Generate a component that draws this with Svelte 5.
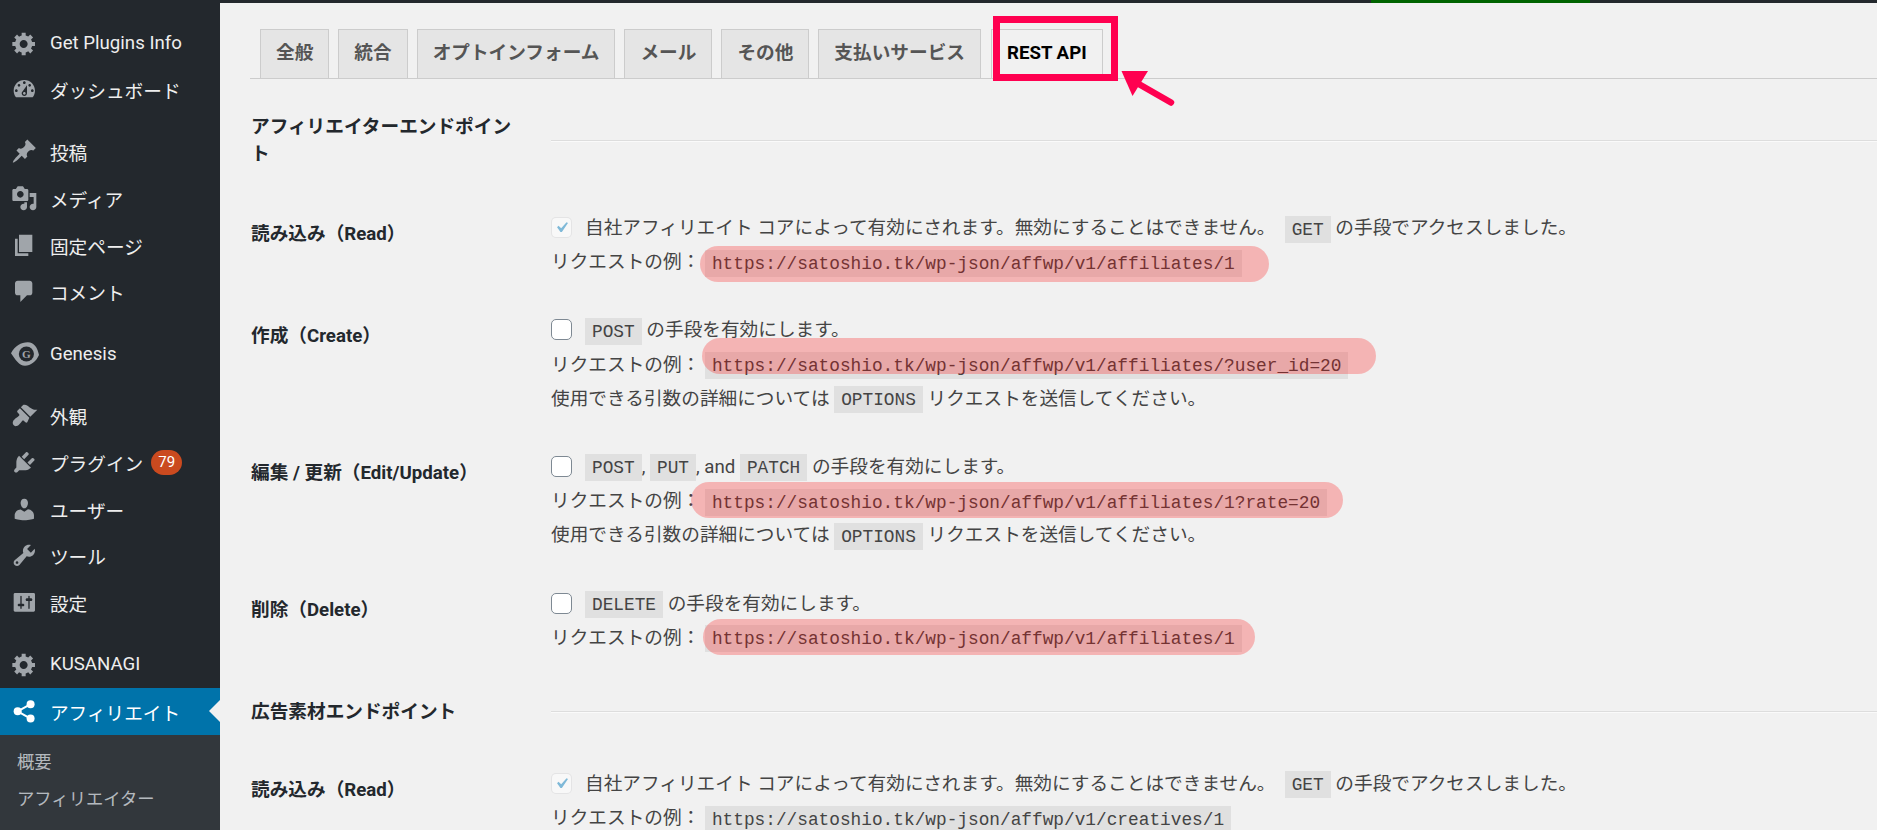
<script>
  const menu = [
    { label: "Get Plugins Info", icon: "gear" },
    { label: "ダッシュボード", icon: "dashboard" },
    { sep: true },
    { label: "投稿", icon: "pin" },
    { label: "メディア", icon: "media" },
    { label: "固定ページ", icon: "page" },
    { label: "コメント", icon: "comment" },
    { sep: true },
    { label: "Genesis", icon: "genesis" },
    { sep: true },
    { label: "外観", icon: "brush" },
    { label: "プラグイン", icon: "plugin", badge: 79 },
    { label: "ユーザー", icon: "user" },
    { label: "ツール", icon: "wrench" },
    { label: "設定", icon: "sliders" },
    { sep: true },
    { label: "KUSANAGI", icon: "gear" },
    { label: "アフィリエイト", icon: "share", active: true },
  ];

  const icons = {
    gear: "M18 12h-2.18c-.17.7-.44 1.35-.81 1.93l1.54 1.54-2.1 2.1-1.54-1.54c-.58.36-1.23.63-1.91.79V19H8v-2.18c-.68-.16-1.33-.43-1.91-.79l-1.54 1.54-2.12-2.12 1.54-1.54c-.36-.58-.63-1.23-.79-1.91H1V9.03h2.17c.16-.7.44-1.35.8-1.94L2.43 5.55l2.1-2.1 1.54 1.54c.58-.37 1.24-.64 1.93-.81V2h3v2.18c.68.16 1.33.43 1.91.79l1.54-1.54 2.12 2.12-1.54 1.54c.36.59.64 1.24.8 1.94H18V12zm-8.5 1.5c1.66 0 3-1.34 3-3s-1.34-3-3-3-3 1.34-3 3 1.34 3 3 3z",
    dashboard: "M3.76 16h12.48c1.1-1.37 1.76-3.11 1.76-5 0-4.42-3.58-8-8-8s-8 3.58-8 8c0 1.89.66 3.63 1.76 5zM10 4c.55 0 1 .45 1 1s-.45 1-1 1-1-.45-1-1 .45-1 1-1zM6 6c.55 0 1 .45 1 1s-.45 1-1 1-1-.45-1-1 .45-1 1-1zm8 0c.55 0 1 .45 1 1s-.45 1-1 1-1-.45-1-1 .45-1 1-1zm-5.37 5.55L12 7v6c0 1.1-.9 2-2 2s-2-.9-2-2c0-.57.24-1.08.63-1.45zM4 10c.55 0 1 .45 1 1s-.45 1-1 1-1-.45-1-1 .45-1 1-1zm12 0c.55 0 1 .45 1 1s-.45 1-1 1-1-.45-1-1 .45-1 1-1zm-5 3c0-.55-.45-1-1-1s-1 .45-1 1 .45 1 1 1 1-.45 1-1z",
    pin: "M10.44 3.02l1.82-1.82 6.36 6.35-1.83 1.82c-1.05-.68-2.48-.57-3.41.36l-.75.75c-.92.93-1.04 2.35-.35 3.41l-1.83 1.82-2.41-2.41-2.8 2.79c-.42.42-3.38 2.71-3.8 2.29s1.86-3.39 2.28-3.81l2.79-2.79L4.1 9.36l1.83-1.82c1.05.69 2.48.57 3.4-.36l.75-.75c.93-.92 1.05-2.35.36-3.41z",
    media: "M13 11V4c0-.55-.45-1-1-1h-1.67L9 1H5L3.67 3H2c-.55 0-1 .45-1 1v7c0 .55.45 1 1 1h10c.55 0 1-.45 1-1zM7 4.5c1.38 0 2.5 1.12 2.5 2.5S8.38 9.5 7 9.5 4.5 8.38 4.5 7 5.62 4.5 7 4.5zM14 6h5v10.5c0 1.38-1.12 2.5-2.5 2.5S14 17.88 14 16.5s1.12-2.5 2.5-2.5c.17 0 .34.02.5.05V9h-3V6zm-4 8.05V13h2v3.5c0 1.38-1.12 2.5-2.5 2.5S7 17.88 7 16.5 8.12 14 9.5 14c.17 0 .34.02.5.05z",
    page: "M6 15V2h10v13H6zm-1 1h8v2H3V5h2v11z",
    comment: "M5 2h9c1.1 0 2 .9 2 2v7c0 1.1-.9 2-2 2h-2l-5 5v-5H5c-1.1 0-2-.9-2-2V4c0-1.1.9-2 2-2z",
    brush: "M14.48 11.06L7.41 3.99l1.5-1.5c.5-.56 2.3-.47 3.51.32 1.21.8 1.43 1.28 2.91 2.1 1.18.64 2.45 1.26 4.45.85zm-.71.71L6.7 4.7 4.93 6.47c-.39.39-.39 1.02 0 1.41l1.06 1.06c.39.39.39 1.03 0 1.42-.6.6-1.43 1.11-2.21 1.69-.35.26-.7.53-1.01.84C1.43 13.71.96 15.56 1.54 16.78c.53 1.1 1.48 1.6 2.67 1.3.98-.24 1.76-.97 2.43-1.7.58-.78 1.09-1.61 1.69-2.21.39-.39 1.03-.39 1.42 0l1.06 1.06c.39.39 1.02.39 1.41 0z",
    plugin: "M13.11 4.36L9.87 7.6 8 5.73l3.24-3.24c.35-.34 1.05-.2 1.56.32.52.51.66 1.21.31 1.55zm-8 1.77l.91-1.12 9.01 9.01-1.19.84c-.71.71-2.63 1.16-3.82 1.16H6.14L4.9 17.26c-.59.59-1.54.59-2.12 0-.59-.58-.59-1.53 0-2.12l1.24-1.24v-3.88c0-1.13.4-3.19 1.09-3.89zm7.26 3.97l3.24-3.24c.34-.35 1.04-.21 1.55.31.52.51.66 1.21.31 1.55l-3.24 3.25z",
    user: "M10 9.25c-2.27 0-2.73-3.44-2.73-3.44C7 4.02 7.82 2 9.97 2c2.16 0 2.98 2.02 2.71 3.81 0 0-.41 3.44-2.68 3.44zm0 2.57L12.72 10c2.39 0 4.52 2.33 4.52 4.53v2.49s-3.65 1.13-7.24 1.13c-3.65 0-7.24-1.13-7.24-1.13v-2.49c0-2.25 1.94-4.48 4.47-4.48z",
    wrench: "M16.68 9.77c-1.34 1.34-3.3 1.67-4.95.99l-5.41 6.52c-.99.99-2.59.99-3.58 0s-.99-2.59 0-3.57l6.52-5.42c-.68-1.65-.35-3.61.99-4.95 1.28-1.28 3.12-1.62 4.72-1.06l-2.89 2.89 2.82 2.82 2.86-2.87c.53 1.58.18 3.39-1.08 4.67zM3.81 16.21c.4.39 1.04.39 1.43 0 .4-.4.4-1.04 0-1.43-.39-.4-1.03-.4-1.43 0-.39.39-.39 1.03 0 1.43z",
    sliders: "M18 16V4c0-.55-.45-1-1-1H3c-.55 0-1 .45-1 1v12c0 .55.45 1 1 1h14c.55 0 1-.45 1-1zM8 11h1c.55 0 1 .45 1 1s-.45 1-1 1H8v1.5c0 .28-.22.5-.5.5s-.5-.22-.5-.5V13H6c-.55 0-1-.45-1-1s.45-1 1-1h1V5.5c0-.28.22-.5.5-.5s.5.22.5.5V11zm5-2h-1c-.55 0-1-.45-1-1s.45-1 1-1h1V5.5c0-.28.22-.5.5-.5s.5.22.5.5V7h1c.55 0 1 .45 1 1s-.45 1-1 1h-1v5.5c0 .28-.22.5-.5.5s-.5-.22-.5-.5V9z",
  };

  const tabs = ["全般", "統合", "オプトインフォーム", "メール", "その他", "支払いサービス"];

  const base = "https://satoshio.tk/wp-json/affwp/v1/";
  const request = "リクエストの例：";

  // highlighter strokes drawn over the screenshot
  const marks = [
    { x: 700, y: 246, w: 569, h: 36 },
    { x: 702, y: 338, w: 674, h: 36 },
    { x: 691, y: 482, w: 652, h: 36 },
    { x: 703, y: 619, w: 552, h: 36 },
  ];
</script>

<div class="page">
  <div class="topbar"><span class="green"></span></div>

  <div class="layout">
    <nav class="sidebar">
      {#each menu as item}
        {#if item.sep}
          <div class="sep"></div>
        {:else}
          <div class="item" class:active={item.active}>
            <span class="icon">
              {#if item.icon === "genesis"}
                <svg viewBox="0 0 20 20" width="28" height="28">
                  <path d="M0 9.5C3 4 7 1.6 12 1.6c4.6 0 7 4 8 9.2-2 4.6-6 7.6-10 7.6-4.2 0-7-4.4-10-8.900z" fill="#a0a5aa" />
                  <circle cx="11" cy="10" r="5.400" fill="#23282d" />
                  <text x="11" y="13" text-anchor="middle" class="g">G</text>
                </svg>
              {:else if item.icon === "share"}
                <svg viewBox="0 0 20 20" width="26.670" height="26.670" fill="#fff">
                  <circle cx="14.700" cy="4.600" r="3" />
                  <circle cx="5" cy="10" r="3" />
                  <circle cx="14.700" cy="15.400" r="3" />
                  <path d="M5 10l9.700-5.400M5 10l9.700 5.400" stroke="#fff" stroke-width="1.500" />
                </svg>
              {:else}
                <svg viewBox="0 0 20 20" width="26.670" height="26.670" fill="#a0a5aa">
                  <path d={icons[item.icon]} />
                </svg>
              {/if}
            </span>
            <span>{item.label}</span>
            {#if item.badge}<span class="badge">{item.badge}</span>{/if}
            {#if item.active}<span class="caret"></span>{/if}
          </div>
        {/if}
      {/each}
      <div class="submenu">
        <div>概要</div>
        <div>アフィリエイター</div>
      </div>
    </nav>

    <main class="content">
      <div class="tabs">
        {#each tabs as tab}
          <span class="tab">{tab}</span>
        {/each}
        <span class="tab current">REST API</span>
      </div>

      <div class="section first">
        <h3>アフィリエイターエンドポイント</h3>
        <div class="rule"></div>
      </div>

      <div class="row">
        <div class="label">読み込み（Read）</div>
        <div class="value">
          <div class="line">
            <span class="check done"><svg viewBox="0 0 20 20" width="21" height="21"><path d="M14.830 4.890l1.340.940-5.810 8.380H9.020L5.780 9.670l1.340-1.250 2.570 2.400z" fill="#7fb9d8" /></svg></span>
            自社アフィリエイト コアによって有効にされます。無効にすることはできません。&nbsp; <code>GET</code> の手段でアクセスしました。
          </div>
          <div class="line">{request} <code>{base}affiliates/1</code></div>
        </div>
      </div>

      <div class="row">
        <div class="label">作成（Create）</div>
        <div class="value">
          <div class="line"><span class="check"></span><code>POST</code> の手段を有効にします。</div>
          <div class="line">{request} <code>{base}affiliates/?user_id=20</code></div>
          <div class="line">使用できる引数の詳細については <code>OPTIONS</code> リクエストを送信してください。</div>
        </div>
      </div>

      <div class="row">
        <div class="label">編集 / 更新（Edit/Update）</div>
        <div class="value">
          <div class="line"><span class="check"></span><code>POST</code>, <code>PUT</code>, and <code>PATCH</code> の手段を有効にします。</div>
          <div class="line">{request} <code>{base}affiliates/1?rate=20</code></div>
          <div class="line">使用できる引数の詳細については <code>OPTIONS</code> リクエストを送信してください。</div>
        </div>
      </div>

      <div class="row">
        <div class="label">削除（Delete）</div>
        <div class="value">
          <div class="line"><span class="check"></span><code>DELETE</code> の手段を有効にします。</div>
          <div class="line">{request} <code>{base}affiliates/1</code></div>
        </div>
      </div>

      <div class="section second">
        <h3>広告素材エンドポイント</h3>
        <div class="rule"></div>
      </div>

      <div class="row">
        <div class="label">読み込み（Read）</div>
        <div class="value">
          <div class="line">
            <span class="check done"><svg viewBox="0 0 20 20" width="21" height="21"><path d="M14.830 4.890l1.340.940-5.810 8.380H9.020L5.780 9.670l1.340-1.250 2.570 2.400z" fill="#7fb9d8" /></svg></span>
            自社アフィリエイト コアによって有効にされます。無効にすることはできません。&nbsp; <code>GET</code> の手段でアクセスしました。
          </div>
          <div class="line">{request} <code>{base}creatives/1</code></div>
        </div>
      </div>
    </main>
  </div>

  <!-- annotations on top of the screenshot -->
  {#each marks as m}
    <div class="mark" style="left:{m.x}px;top:{m.y}px;width:{m.w}px;height:{m.h}px"></div>
  {/each}
  <div class="frame"></div>
  <svg class="arrow" width="70" height="50" viewBox="1115 65 70 50">
    <path d="M1121.500 71H1148L1132.500 96z" fill="#ff0050" />
    <path d="M1130 79L1171 102.500" stroke="#ff0050" stroke-width="6.500" stroke-linecap="round" />
  </svg>
</div>

<style>
  :global(body) {
    margin: 0;
    overflow: hidden;
    background: #f1f1f1;
  }

  .page {
    position: relative;
    height: 830px;
    overflow: hidden;
    font-family: Roboto, "Noto Sans CJK JP", sans-serif;
    font-size: 18.67px;
    color: #444;
    background: #f1f1f1;
  }

  .topbar {
    height: 3px;
    background: #23282d;
    padding-left: 1371px;
  }

  .green {
    display: block;
    width: 219px;
    height: 3px;
    background: #006400;
  }

  .layout {
    display: flex;
    height: 827px;
  }

  .sidebar {
    width: 220px;
    flex: none;
    background: #23282d;
    padding-top: 16.700px;
    color: #eee;
  }

  .sep {
    height: 15.300px;
  }

  .item {
    position: relative;
    display: flex;
    align-items: center;
    height: 46.700px;
    padding-left: 10.700px;
  }

  .icon {
    width: 26.670px;
    height: 26.670px;
    margin-right: 12.600px;
    flex: none;
  }

  .icon svg {
    display: block;
    overflow: visible;
  }

  .g {
    font-family: "Liberation Serif", serif;
    font-size: 8px;
    font-weight: 700;
    fill: #a0a5aa;
  }

  .item.active {
    background: #0073aa;
    color: #fff;
  }

  .badge {
    margin-left: 8px;
    width: 31px;
    height: 25px;
    border-radius: 12.500px;
    background: #ca4a1f;
    color: #fff;
    font-size: 15px;
    line-height: 25px;
    text-align: center;
  }

  .caret {
    position: absolute;
    right: 0;
    top: 12px;
    border: 11.500px solid transparent;
    border-right-color: #f1f1f1;
    border-left-width: 0;
  }

  .submenu {
    background: #32373c;
    color: rgba(240, 245, 250, 0.7);
    font-size: 17.330px;
    padding: 9.500px 0 20px 17px;
  }

  .submenu div {
    height: 37px;
    line-height: 37px;
  }

  .content {
    flex: 1;
    padding-left: 30px;
    min-width: 0;
  }

  .tabs {
    display: flex;
    gap: 9px;
    margin-top: 26px;
    padding-left: 10px;
    border-bottom: 1px solid #ccc;
    height: 49px;
  }

  .tab {
    box-sizing: border-box;
    height: 49px;
    padding: 0 15px;
    line-height: 47px;
    background: #e5e5e5;
    border: 1px solid #ccc;
    border-bottom: 0;
    color: #555;
    font-weight: 700;
  }

  .tab.current {
    background: #f1f1f1;
    color: #000;
    margin-left: 1px;
  }

  .section {
    display: grid;
    grid-template-columns: 301px 1fr;
    align-items: center;
  }

  .section.first {
    margin-top: 35px;
    margin-bottom: 43px;
  }

  .section.second {
    margin-top: 44px;
    margin-bottom: 41px;
  }

  h3 {
    width: 270px;
    margin: 0;
    font-size: 18.67px;
    line-height: 27px;
    font-weight: 700;
    color: #23282d;
    padding-left: 1px;
  }

  .rule {
    height: 1px;
    background: #ddd;
    border-bottom: 1px solid #fafafa;
  }

  .row {
    display: grid;
    grid-template-columns: 301px 1fr;
    margin-bottom: 34px;
  }

  .label {
    padding: 10px 0 0 1px;
    line-height: 27px;
    font-weight: 700;
    color: #23282d;
  }

  .line {
    height: 34.200px;
    line-height: 34.200px;
    white-space: nowrap;
  }

  code {
    font-family: "Liberation Mono", monospace;
    font-size: 17.800px;
    padding: 3.500px 7px;
    background: rgba(0, 0, 0, 0.07);
    color: #444;
  }

  .check {
    display: inline-block;
    box-sizing: border-box;
    width: 21px;
    height: 21px;
    margin-right: 13px;
    border: 1px solid #7e8993;
    border-radius: 5px;
    background: #fff;
    vertical-align: -4px;
  }

  .check.done {
    background: rgba(255, 255, 255, 0.5);
    border-color: rgba(220, 220, 222, 0.75);
    margin-right: 8.400px;
  }

  .check svg {
    display: block;
    margin: -1px;
  }

  .mark {
    position: absolute;
    border-radius: 18px;
    background: rgba(255, 0, 0, 0.25);
  }

  .frame {
    position: absolute;
    left: 993px;
    top: 16px;
    width: 125px;
    height: 65px;
    box-sizing: border-box;
    border: 7px solid #ff0050;
  }

  .arrow {
    position: absolute;
    left: 1115px;
    top: 65px;
  }
</style>
